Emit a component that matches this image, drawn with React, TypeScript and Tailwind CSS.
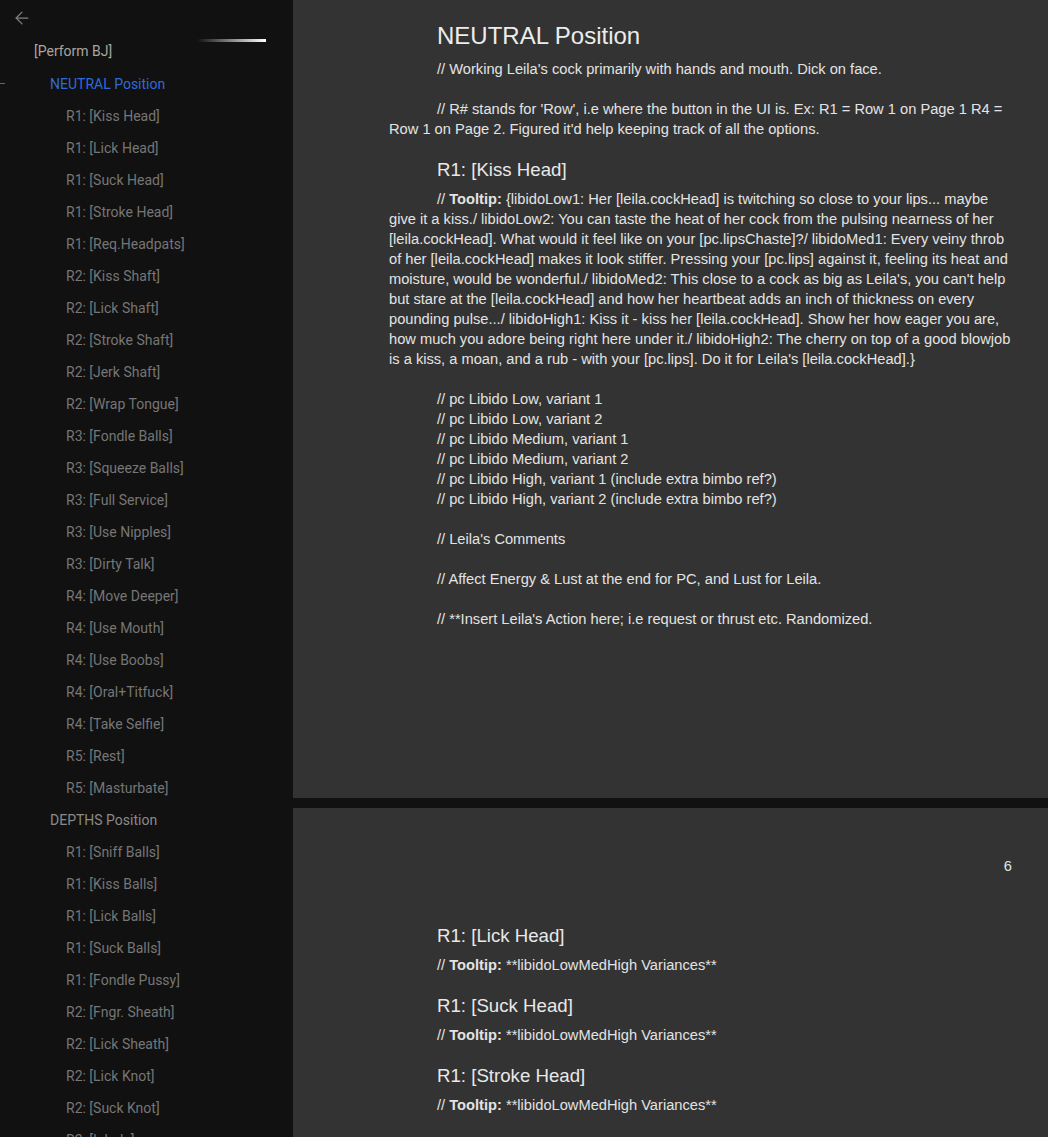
import React from "react";
import { ArrowLeft } from "lucide-react";

type NavItem = { label: string; level: 0 | 1 | 2; active?: boolean };

const nav: NavItem[] = [
  { label: "[Perform BJ]", level: 0 },
  { label: "NEUTRAL Position", level: 1, active: true },
  { label: "R1: [Kiss Head]", level: 2 },
  { label: "R1: [Lick Head]", level: 2 },
  { label: "R1: [Suck Head]", level: 2 },
  { label: "R1: [Stroke Head]", level: 2 },
  { label: "R1: [Req.Headpats]", level: 2 },
  { label: "R2: [Kiss Shaft]", level: 2 },
  { label: "R2: [Lick Shaft]", level: 2 },
  { label: "R2: [Stroke Shaft]", level: 2 },
  { label: "R2: [Jerk Shaft]", level: 2 },
  { label: "R2: [Wrap Tongue]", level: 2 },
  { label: "R3: [Fondle Balls]", level: 2 },
  { label: "R3: [Squeeze Balls]", level: 2 },
  { label: "R3: [Full Service]", level: 2 },
  { label: "R3: [Use Nipples]", level: 2 },
  { label: "R3: [Dirty Talk]", level: 2 },
  { label: "R4: [Move Deeper]", level: 2 },
  { label: "R4: [Use Mouth]", level: 2 },
  { label: "R4: [Use Boobs]", level: 2 },
  { label: "R4: [Oral+Titfuck]", level: 2 },
  { label: "R4: [Take Selfie]", level: 2 },
  { label: "R5: [Rest]", level: 2 },
  { label: "R5: [Masturbate]", level: 2 },
  { label: "DEPTHS Position", level: 1 },
  { label: "R1: [Sniff Balls]", level: 2 },
  { label: "R1: [Kiss Balls]", level: 2 },
  { label: "R1: [Lick Balls]", level: 2 },
  { label: "R1: [Suck Balls]", level: 2 },
  { label: "R1: [Fondle Pussy]", level: 2 },
  { label: "R2: [Fngr. Sheath]", level: 2 },
  { label: "R2: [Lick Sheath]", level: 2 },
  { label: "R2: [Lick Knot]", level: 2 },
  { label: "R2: [Suck Knot]", level: 2 },
  { label: "R2: [Inhale]", level: 2 },
];

function Sidebar() {
  return (
    <aside className="w-[293px] shrink-0 bg-[#111111] font-['Roboto',sans-serif] text-[14px]">
      <div className="h-[35px] pl-[12px] pt-[8px] text-[#808080]">
        <ArrowLeft size={20} strokeWidth={1.5} />
      </div>
      {nav.map((item, i) => (
        <div key={i} className={`relative flex items-center ${i === 0 ? "h-[32px]" : "h-[32px]"} ${i === 1 ? "mt-[1px]" : ""}`}>
          {item.active && <div className="absolute left-0 top-[15px] h-[1px] w-[5px] bg-[#2f6bd8]" />}
          <span
            className={
              item.level === 0
                ? "pl-[34px] text-[#aaa6a0]"
                : item.level === 1
                ? item.active
                  ? "pl-[50px] text-[#2f6bd8]"
                  : "pl-[50px] text-[#8a8a8a]"
                : "pl-[66px] text-[#767676]"
            }
          >
            {item.label}
          </span>
          {i === 0 && (
            <div className="absolute left-[197px] top-[4px] h-[3px] w-[69px] bg-gradient-to-r from-transparent to-white" />
          )}
        </div>
      ))}
    </aside>
  );
}

function P({ children, indent = true }: { children?: React.ReactNode; indent?: boolean }) {
  return <p className={`min-h-[20px] leading-[20px] ${indent ? "indent-[48px]" : ""}`}>{children}</p>;
}

function H2({ children, className = "" }: { children: React.ReactNode; className?: string }) {
  return <h2 className={`pl-[48px] text-[18.67px] leading-[24px] text-[#e8e8e8] ${className}`}>{children}</h2>;
}

function Tip({ children }: { children: React.ReactNode }) {
  return (
    <P>
      // <b>Tooltip:</b> {children}
    </P>
  );
}

export default function App() {
  return (
    <div className="flex h-[1137px] w-[1048px] overflow-hidden bg-[#111111]">
      <Sidebar />
      <main className="flex flex-1 flex-col gap-[10px] font-['Liberation_Sans',Arial,sans-serif] text-[14.67px] text-[#e3e3e3]">
        <section className="h-[798px] shrink-0 bg-[#333333] pl-[96px] pr-[29px] pt-[21px]">
          <h1 className="pl-[48px] text-[24px] leading-[30px] text-[#ececec]">NEUTRAL Position</h1>
          <div className="mt-[8px]">
            <P>// Working Leila's cock primarily with hands and mouth. Dick on face.</P>
            <P />
            <P>
              // R# stands for 'Row', i.e where the button in the UI is. Ex: R1 = Row 1 on Page 1 R4 = Row 1 on Page 2.
              Figured it'd help keeping track of all the options.
            </P>
          </div>
          <H2 className="mt-[19px]">R1: [Kiss Head]</H2>
          <div className="mt-[7px]">
            <Tip>
              {"{libidoLow1: Her [leila.cockHead] is twitching so close to your lips... maybe give it a kiss./ libidoLow2: You can taste the heat of her cock from the pulsing nearness of her [leila.cockHead]. What would it feel like on your [pc.lipsChaste]?/ libidoMed1: Every veiny throb of her [leila.cockHead] makes it look stiffer. Pressing your [pc.lips] against it, feeling its heat and moisture, would be wonderful./ libidoMed2: This close to a cock as big as Leila's, you can't help but stare at the [leila.cockHead] and how her heartbeat adds an inch of thickness on every pounding pulse.../ libidoHigh1: Kiss it - kiss her [leila.cockHead]. Show her how eager you are, how much you adore being right here under it./ libidoHigh2: The cherry on top of a good blowjob is a kiss, a moan, and a rub - with your [pc.lips]. Do it for Leila's [leila.cockHead].}"}
            </Tip>
            <P />
            <P>// pc Libido Low, variant 1</P>
            <P>// pc Libido Low, variant 2</P>
            <P>// pc Libido Medium, variant 1</P>
            <P>// pc Libido Medium, variant 2</P>
            <P>// pc Libido High, variant 1 (include extra bimbo ref?)</P>
            <P>// pc Libido High, variant 2 (include extra bimbo ref?)</P>
            <P />
            <P>// Leila's Comments</P>
            <P />
            <P>// Affect Energy &amp; Lust at the end for PC, and Lust for Leila.</P>
            <P />
            <P>// **Insert Leila's Action here; i.e request or thrust etc. Randomized.</P>
          </div>
        </section>
        <section className="flex-1 bg-[#333333] pl-[96px] pr-[29px] pt-[48px]">
          <div className="flex justify-end pr-[7px] leading-[20px]">6</div>
          <div className="mt-[48px] flex flex-col gap-[19px]">
            {["R1: [Lick Head]", "R1: [Suck Head]", "R1: [Stroke Head]"].map(t => (
              <div key={t}>
                <H2>{t}</H2>
                <div className="mt-[7px]">
                  <Tip>**libidoLowMedHigh Variances**</Tip>
                </div>
              </div>
            ))}
          </div>
        </section>
      </main>
    </div>
  );
}
